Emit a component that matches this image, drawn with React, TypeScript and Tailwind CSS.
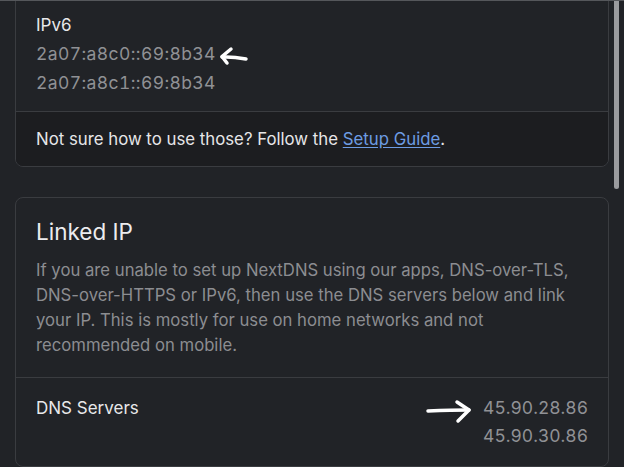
import React from "react";

const ipv6 = ["2a07:a8c0::69:8b34", "2a07:a8c1::69:8b34"];
const dnsServers = ["45.90.28.86", "45.90.30.86"];

export default function App() {
  return (
    <div
      className="relative w-[624px] h-[467px] overflow-hidden bg-[#212327] border-t border-[#55575b]"
      style={{ fontFamily: "Inter, 'Noto Sans', sans-serif" }}
    >
      <div className="flex flex-col gap-[30px] pl-[15px] pr-[15px] -mt-[11px]">
        {/* IPv6 card (top cut off) */}
        <div className="rounded-lg border border-[#3a3c40] bg-[#212327] overflow-hidden">
          <div className="px-5 pt-5 pb-[14px]">
            <div className="text-[17px] leading-[28px] text-[#e8e8ea]">IPv6</div>
            {ipv6.map((ip) => (
              <div key={ip} className="text-[17.5px] leading-[29px] text-[#909195] tabular-nums tracking-[0.4px]">
                {ip}
              </div>
            ))}
          </div>
          <div className="border-t border-[#3a3c40] bg-[#1c1d20] px-5 pt-[14px] pb-[14px] text-[16.8px] leading-[26px] text-[#e6e6e8]">
            Not sure how to use those? Follow the{" "}
            <a className="text-[#6d9ce3] underline underline-offset-2">Setup Guide</a>.
          </div>
        </div>

        {/* Linked IP card */}
        <div className="rounded-lg border border-[#3a3c40] bg-[#212327]">
          <div className="px-5 pt-[18px] pb-[19px]">
            <h2 className="text-[22.5px] leading-[32px] text-[#ececee] font-normal">Linked IP</h2>
            <p className="mt-[10px] text-[16.7px] leading-[25px] text-[#8c8d91]">
              If you are unable to set up NextDNS using our apps, DNS-over-TLS,
              <br />
              DNS-over-HTTPS or IPv6, then use the DNS servers below and link
              <br />
              your IP. This is mostly for use on home networks and not
              <br />
              recommended on mobile.
            </p>
          </div>
          <div className="border-t border-[#3a3c40] px-5 pt-[16px] pb-4 flex justify-between">
            <div className="text-[17px] leading-[28px] text-[#e8e8ea]">DNS Servers</div>
            <div className="flex flex-col items-end">
              {dnsServers.map((ip) => (
                <div key={ip} className="text-[17.5px] leading-[28px] text-[#909195] tabular-nums">
                  {ip}
                </div>
              ))}
            </div>
          </div>
        </div>
      </div>

      {/* scrollbar */}
      <div className="absolute right-[5px] -top-2 w-[5px] h-[196px] rounded-full bg-[#9a9b9e]" />

      {/* hand-drawn annotations */}
      <svg
        className="absolute inset-0 pointer-events-none"
        width="624"
        height="467"
        viewBox="0 0 624 467"
        fill="none"
        stroke="#ffffff"
        strokeWidth="3.5"
        strokeLinecap="round"
        strokeLinejoin="round"
      >
        <path d="M246 58 C238 56.5 230 55.5 222 56" />
        <path d="M231 48 L222 55.5 L227 62" />
        <path d="M428 410 C440 409.5 455 409 469 409" />
        <path d="M457 401 L469 409 L458 420" />
      </svg>
    </div>
  );
}
